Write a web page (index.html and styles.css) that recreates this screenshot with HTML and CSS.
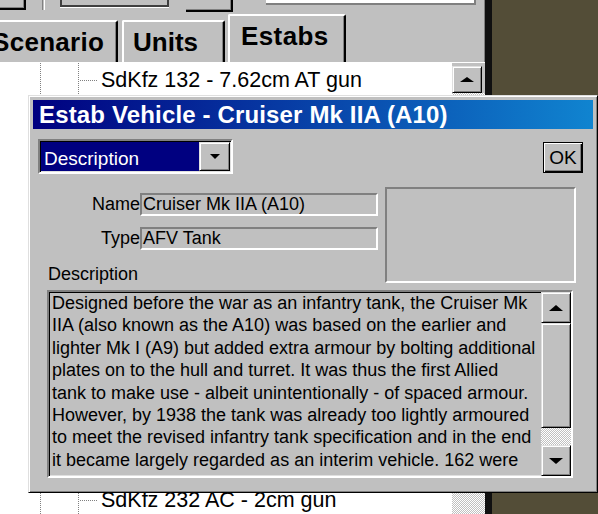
FILE: index.html
```html
<!DOCTYPE html>
<html lang="en">
<head>
    <meta charset="UTF-8">
    <meta name="viewport" content="width=device-width, initial-scale=1.0">
    <title>Estab Vehicle</title>
    <link rel="stylesheet" href="styles.css">
</head>
<body>
    <div class="desktop">
        <div class="app">
            <div class="toolbar">
                <div class="tb-btn tb-a"></div>
                <div class="tb-sep"></div>
                <div class="tb-box"></div>
                <div class="tb-btn tb-d"></div>
                <div class="tb-field"></div>
            </div>
            <div class="tabs">
                <div class="tab tab-scenario">Scenario</div>
                <div class="tab tab-units">Units</div>
                <div class="tab tab-estabs active">Estabs</div>
            </div>
            <div class="list-wrap">
                <div class="tree">
                    <div class="row"><span class="branch"></span>SdKfz 132 - 7.62cm AT gun</div>
                    <div class="row"><span class="branch"></span>SdKfz 232 AC - 2cm gun</div>
                </div>
                <div class="vscroll list-scroll">
                    <div class="sbtn"><span class="arrow-up"></span></div>
                    <div class="track"></div>
                </div>
            </div>
        </div>

        <!-- dialog window on top of the main window -->
        <div class="dialog">
            <div class="titlebar">Estab Vehicle - Cruiser Mk IIA (A10)</div>
            <div class="dialog-body">
                <div class="top-row">
                    <div class="combo">
                        <div class="combo-value">Description</div>
                        <div class="combo-btn"><span class="arrow-down"></span></div>
                    </div>
                    <div class="ok-btn">OK</div>
                </div>
                <div class="info-row">
                    <div class="fields">
                        <div class="field-row">
                            <span class="field-label">Name</span>
                            <div class="field">Cruiser Mk IIA (A10)</div>
                        </div>
                        <div class="field-row">
                            <span class="field-label">Type</span>
                            <div class="field">AFV Tank</div>
                        </div>
                        <div class="desc-label">Description</div>
                    </div>
                    <div class="picture"></div>
                </div>
                <div class="desc-box">
                    <div class="desc-text">Designed before the war as an infantry tank, the Cruiser Mk<br>IIA (also known as the A10) was based on the earlier and<br>lighter Mk I (A9) but added extra armour by bolting additional<br>plates on to the hull and turret. It was thus the first Allied<br>tank to make use - albeit unintentionally - of spaced armour.<br>However, by 1938 the tank was already too lightly armoured<br>to meet the revised infantry tank specification and in the end<br>it became largely regarded as an interim vehicle. 162 were</div>
                    <div class="vscroll desc-scroll">
                        <div class="sbtn"><span class="arrow-up"></span></div>
                        <div class="thumb"></div>
                        <div class="track"></div>
                        <div class="sbtn"><span class="arrow-down big"></span></div>
                    </div>
                </div>
            </div>
        </div>
    </div>
</body>
</html>
```

FILE: styles.css
```css
* { box-sizing: border-box; }
body { margin: 0; font-family: "Liberation Sans", Arial, sans-serif; color: #000; }
.desktop { position: relative; width: 598px; height: 514px; overflow: hidden; background: #534d37; }

/* main window behind the dialog */
.app { width: 492px; height: 514px; background: #c0c0c0; border-right: 7px solid #101010; box-shadow: inset -1px 0 #808080; display: flex; flex-direction: column; }
.toolbar { height: 14px; display: flex; align-items: flex-start; flex-shrink: 0; }
.tb-btn { background: #c0c0c0; border-right: 2px solid #000; border-bottom: 2px solid #000; box-shadow: inset -1px -1px #808080; }
.tb-a { width: 26px; height: 10px; }
.tb-sep { width: 3px; height: 10px; margin-left: 16px; border-left: 1px solid #808080; border-right: 1px solid #fff; }
.tb-box { width: 109px; height: 7px; margin-left: 15px; border: 2px solid #404040; border-top: 0; box-shadow: 0 1px #fff; }
.tb-d { width: 47px; height: 12px; margin-left: 17px; }
.tb-field { width: 210px; height: 5px; margin-left: 33px; background: #fff; border-bottom: 2px solid #808080; border-right: 2px solid #808080; }

.tabs { height: 49px; display: flex; align-items: flex-end; flex-shrink: 0; border-bottom: 1px solid #fff; }
.tab { height: 42px; font-size: 26px; font-weight: bold; line-height: 30px; padding-top: 5px; white-space: nowrap; overflow: hidden; border: 2px solid; border-bottom: 0; border-color: #fff #000 transparent #fff; box-shadow: inset -1px 0 #808080; border-radius: 2px 2px 0 0; }
.tab-scenario { width: 126px; margin-left: -8px; padding-left: 0; border-left: 0; letter-spacing: 0.3px; }
.tab-units { width: 103px; margin-left: 4px; padding-left: 9px; }
.tab-estabs { width: 118px; height: 48px; margin-left: 3px; padding-left: 11px; letter-spacing: 0.4px; }

.list-wrap { flex: 1; display: flex; min-height: 0; }
.tree { flex: 1; display: flex; flex-direction: column; justify-content: space-between; padding: 4px 0 1px; font-size: 21.5px; line-height: 26px;
    background:
        linear-gradient(#808080 50%, transparent 50%) 40px 0 / 1px 2px repeat-y,
        linear-gradient(#808080 50%, transparent 50%) 78px 0 / 1px 2px repeat-y,
        #fff; }
.row { display: flex; align-items: center; padding-left: 80px; white-space: nowrap; }
.branch { width: 17px; height: 1px; margin-right: 4px; background: repeating-linear-gradient(to right, #808080 0 1px, transparent 1px 2px); }

/* scrollbars */
.vscroll { display: flex; flex-direction: column; flex-shrink: 0; }
.list-scroll { width: 33px; padding-top: 3px; background: #c0c0c0; }
.list-scroll .sbtn { height: 27px; width: 30px; }
.sbtn, .thumb { display: flex; align-items: center; justify-content: center; background: #c0c0c0; border: 1px solid; border-color: #dfdfdf #000 #000 #dfdfdf; box-shadow: inset 1px 1px #fff, inset -1px -1px #808080; flex-shrink: 0; }
.track { flex: 1; background: repeating-conic-gradient(#fff 0 25%, #c0c0c0 0 50%) 0 0 / 2px 2px; }
.arrow-up { width: 0; height: 0; border-left: 7px solid transparent; border-right: 7px solid transparent; border-bottom: 6px solid #000; }
.list-scroll .arrow-up { border-bottom-width: 5px; }
.arrow-down { width: 0; height: 0; border-left: 5px solid transparent; border-right: 5px solid transparent; border-top: 5px solid #000; }
.arrow-down.big { border-left-width: 7px; border-right-width: 7px; border-top-width: 6px; }

/* dialog */
.dialog { position: absolute; left: 28px; top: 95px; width: 570px; height: 398px; background: #c0c0c0; border: 1px solid; border-color: #dfdfdf #000 #000 #dfdfdf; box-shadow: inset 1px 1px #fff, inset -1px -1px #808080; padding: 4px 4px 0 4px; }
.titlebar { height: 29px; padding-left: 6px; font-size: 24px; font-weight: bold; line-height: 30px; letter-spacing: 0.15px; color: #fff; white-space: nowrap; overflow: hidden; background: linear-gradient(to right, #000080, #1084d0); }
.dialog-body { padding: 10px 10px 0 5px; font-size: 18px; }

.top-row { display: flex; justify-content: space-between; align-items: flex-start; }
.combo { width: 195px; height: 35px; display: flex; border: 2px solid; border-color: #808080 #fff #fff #808080; box-shadow: inset 1px 1px #000, inset -1px -1px #dfdfdf; padding: 1px; }
.combo-value { flex: 1; background: #000080; color: #fff; font-size: 19px; line-height: 31px; padding: 1px 0 0 3px; overflow: hidden; }
.combo-btn { width: 31px; display: flex; align-items: center; justify-content: center; background: #c0c0c0; border: 1px solid; border-color: #dfdfdf #000 #000 #dfdfdf; box-shadow: inset 1px 1px #fff, inset -1px -1px #808080; }
.ok-btn { width: 40px; height: 31px; margin-top: 3px; display: flex; align-items: center; justify-content: center; font-size: 19px; border: 1px solid #000; box-shadow: inset 1px 1px #fff, inset -1px -1px #000, inset -2px -2px #808080; }

.info-row { display: flex; margin-top: 13px; }
.fields { width: 340px; padding-top: 6px; }
.field-row { display: flex; align-items: center; margin-bottom: 11px; }
.field-row:last-of-type { margin-bottom: 0; }
.field-label { width: 102px; text-align: right; line-height: 23px; }
.field { width: 238px; height: 23px; padding-left: 1px; line-height: 19px; white-space: nowrap; overflow: hidden; border: 2px solid; border-color: #808080 #fff #fff #808080; }
.desc-label { margin-top: 15px; padding-left: 10px; line-height: 18px; }
.picture { width: 191px; height: 96px; margin-left: 7px; border: 2px solid; border-color: #808080 #fff #fff #808080; }

.desc-box { width: 526px; height: 188px; margin: 7px 0 0 9px; display: flex; border: 2px solid; border-color: #808080 #fff #fff #808080; box-shadow: inset 1px 1px #000, inset -1px -1px #dfdfdf; }
.desc-text { flex: 1; padding-left: 3px; font-size: 18px; line-height: 22.4px; white-space: nowrap; overflow: hidden; }
.desc-scroll { width: 30px; }
.desc-scroll .sbtn { height: 31px; }
.desc-scroll .thumb { height: 105px; }
```
